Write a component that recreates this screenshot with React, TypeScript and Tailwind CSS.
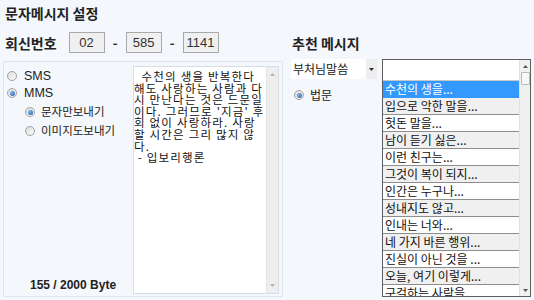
import React from 'react'

const items = [
    '수천의 생을...',
    '입으로 악한 말을...',
    '헛돈 말을...',
    '남이 듣기 싫은...',
    '이런 친구는...',
    '그것이 복이 되지...',
    '인간은 누구나...',
    '성내지도 않고...',
    '인내는 너와...',
    '네 가지 바른 행위...',
    '진실이 아닌 것을 ...',
    '오늘, 여기 이렇게...',
    '구걸하는 사람을...',
]

const lines = [
    '  수천의 생을 반복한다',
    '해도 사랑하는 사람과 다',
    '시 만난다는 것은 드문일',
    '이다. 그러므로 \'지금\' 후',
    '회 없이 사랑하라. 사랑',
    '할 시간은 그리 많지 않',
    '다.',
    ' - 입보리행론',
]

const Radio = ({ checked }: { checked?: boolean }) => (
    <span className="w-[10px] h-[10px] shrink-0 rounded-full border border-[#a2a2a2] bg-[linear-gradient(135deg,#dcdcdc,#fbfbfb)] flex items-center justify-center">
        {checked && <span className="w-[5px] h-[5px] rounded-full bg-[radial-gradient(circle_at_35%_35%,#7fb4ea,#1d5ca6)]" />}
    </span>
)

const Arrow = ({ down, color }: { down?: boolean; color: string }) => (
    <svg width="5" height="3" viewBox="0 0 5 3">
        <path d={down ? 'M0 0H5L2.5 3Z' : 'M0 3H5L2.5 0Z'} fill={color} />
    </svg>
)

const PhoneBox = ({ value }: { value: string }) => (
    <div className="w-[36px] h-[21px] border border-[#a9a9a9] bg-[#f0f0f0] flex items-center justify-center text-[13px] text-[#333] font-['Liberation_Sans',sans-serif]">
        {value}
    </div>
)

export default function App() {
    return (
        <div className="w-[534px] h-[300px] overflow-hidden bg-[#f4f7fb] text-[#222] font-['Noto_Sans_CJK_KR',sans-serif]">
            <div className="pl-[5px] h-[27px] leading-[27px] text-[14px] font-bold">문자메시지 설정</div>

            <div className="flex items-center h-[21px] mt-[5px]">
                <div className="w-[287px] flex items-center pl-[5px]">
                    <span className="text-[14px] font-bold leading-none">회신번호</span>
                    <div className="ml-[12px]"><PhoneBox value="02" /></div>
                    <span className="w-[21px] text-center text-[13px] font-bold">-</span>
                    <PhoneBox value="585" />
                    <span className="w-[21px] text-center text-[13px] font-bold">-</span>
                    <PhoneBox value="1141" />
                </div>
                <span className="pl-[5px] text-[14px] font-bold leading-none">추천 메시지</span>
            </div>

            <div className="flex items-start mt-[6px]">
                {/* left panel */}
                <div className="mt-[2px] ml-[3px] w-[280px] h-[236px] border border-[#dde4eb] rounded-[2px] flex">
                    <div className="w-[129px] flex flex-col text-[12px]">
                        <div className="flex items-center gap-[7px] pl-[3px] mt-[8px] h-[12px]">
                            <Radio />
                            <span className="font-['Liberation_Sans',sans-serif] text-[12.5px]">SMS</span>
                        </div>
                        <div className="flex items-center gap-[7px] pl-[3px] mt-[5px] h-[12px]">
                            <Radio checked />
                            <span className="font-['Liberation_Sans',sans-serif] text-[12.5px]">MMS</span>
                        </div>
                        <div className="flex items-center gap-[6px] pl-[21px] mt-[7px] h-[12px]">
                            <Radio checked />
                            <span className="text-[11.5px]">문자만보내기</span>
                        </div>
                        <div className="flex items-center gap-[6px] pl-[21px] mt-[7px] h-[12px]">
                            <Radio />
                            <span className="text-[11.5px]">이미지도보내기</span>
                        </div>
                        <div className="mt-auto mb-[2px] pl-[26px] text-[12px] font-bold font-['Liberation_Sans',sans-serif]">155 / 2000 Byte</div>
                    </div>

                    <div className="mt-[4px] w-[146px] h-[228px] bg-white border border-[#d6dde4] flex">
                        <div className="flex-1 pt-[4px] text-[11.5px] tracking-[1.2px] leading-[11.6px] text-[#111] whitespace-pre">
                            {lines.map((l, i) => (
                                <div key={i}>{l}</div>
                            ))}
                        </div>
                        <div className="w-[12px] bg-[#eeeeee] border-l border-[#e3e3e3] flex flex-col items-center justify-between py-[6px]">
                            <Arrow color="#b5b5b5" />
                            <Arrow down color="#b5b5b5" />
                        </div>
                    </div>
                </div>

                {/* right panel */}
                <div className="ml-[8px] w-[87px] flex flex-col">
                    <div className="w-[86px] h-[20px] bg-white flex items-center text-[12px]">
                        <span className="flex-1 pl-[2px]">부처님말씀</span>
                        <span className="w-[11px] h-full bg-[#eeeeee] flex items-center justify-center">
                            <Arrow down color="#333" />
                        </span>
                    </div>
                    <div className="flex items-center gap-[6px] pl-[3px] mt-[10px] h-[12px]">
                        <Radio checked />
                        <span className="text-[12px]">법문</span>
                    </div>
                </div>

                <div className="ml-[4px] w-[149px] h-[238px] border border-[#5e5e5e] bg-white flex overflow-hidden">
                    <div className="flex-1 flex flex-col">
                        <div className="h-[21px] shrink-0 border-b border-[#c8c8c8] bg-white" />
                        {items.map((it, i) => (
                            <div
                                key={i}
                                className={`h-[17px] shrink-0 flex items-center pl-[2px] text-[12px] leading-none border-b ${
                                    i === 0
                                        ? 'bg-[#3399ff] text-white border-[#3399ff]'
                                        : i % 2 === 1
                                          ? 'bg-[#f0f0f0] text-[#111] border-[#8e8e8e]'
                                          : 'bg-white text-[#111] border-[#8e8e8e]'
                                }`}
                            >
                                {it}
                            </div>
                        ))}
                    </div>
                    <div className="w-[11px] bg-[#f0f0f0] border-l border-[#e0e0e0] flex flex-col items-center">
                        <div className="h-[12px] flex items-center"><Arrow color="#555" /></div>
                        <div className="w-[9px] h-[13px] bg-[#f8f8f8] border border-[#b9b9b9] rounded-[1px]" />
                        <div className="mt-auto h-[12px] flex items-center"><Arrow down color="#555" /></div>
                    </div>
                </div>
            </div>
        </div>
    )
}
